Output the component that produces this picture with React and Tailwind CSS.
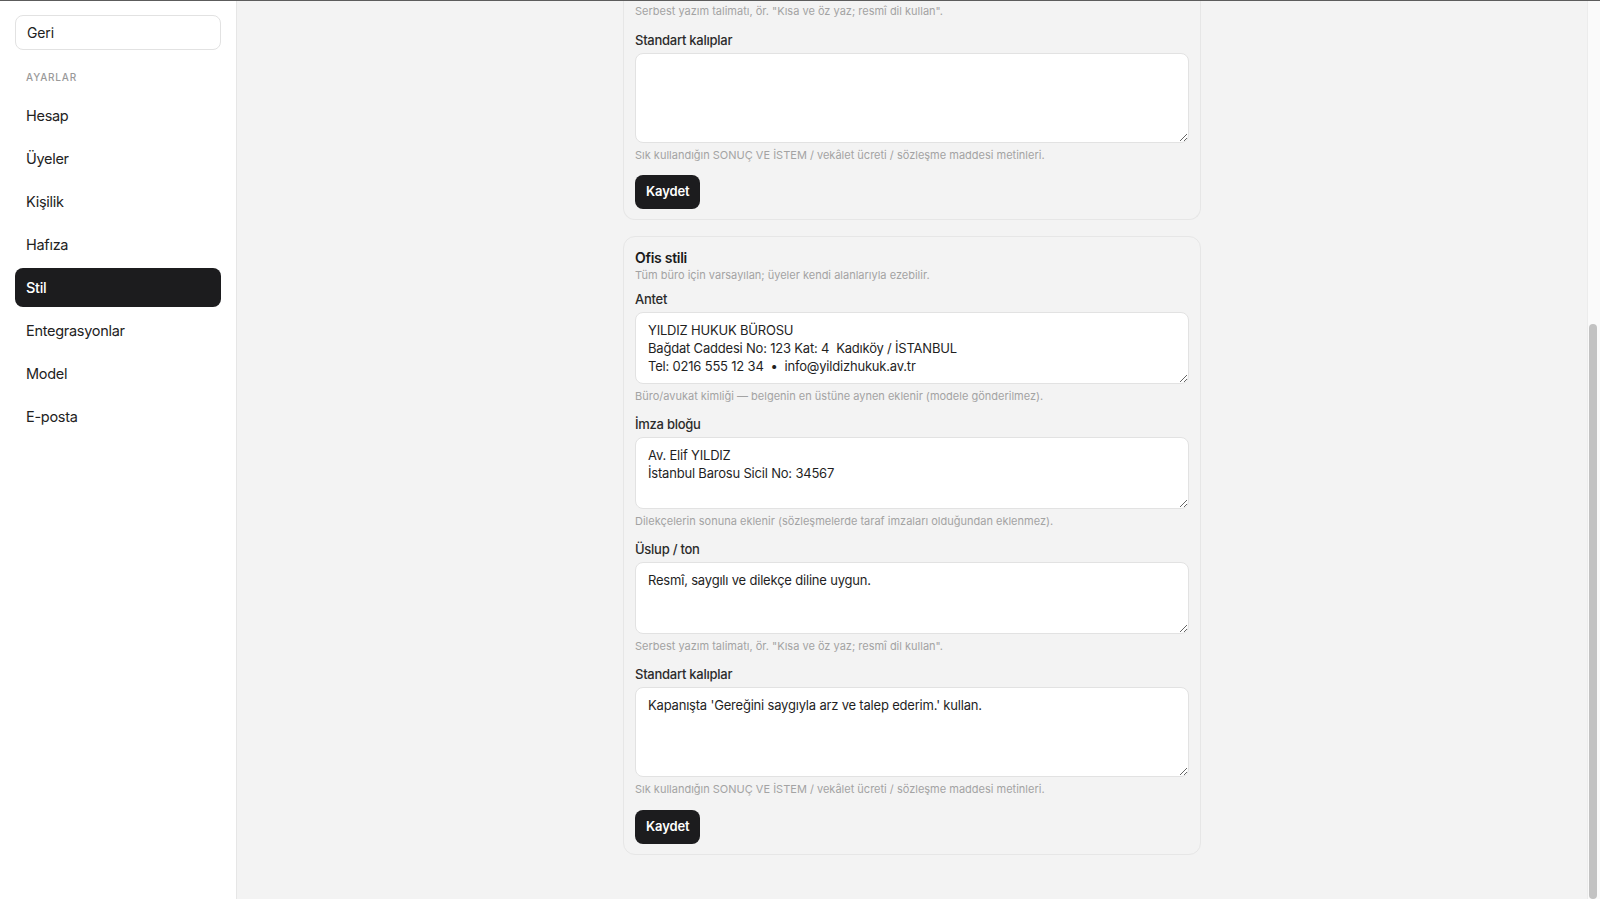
import React from 'react';

const navItems = ['Hesap', 'Üyeler', 'Kişilik', 'Hafıza', 'Stil', 'Entegrasyonlar', 'Model', 'E-posta'];

const Hint = ({ children, className = '' }) => (
  <p className={`text-[11px] leading-4 text-[#a3a3a3] ${className}`}>{children}</p>
);

const Field = ({ label, value, height, hint, className = '' }) => (
  <div className={className}>
    <label className="block text-[13px] leading-[18px] font-medium tracking-[-0.02em] text-[#2b2b2b]">{label}</label>
    <textarea
      defaultValue={value}
      className={`mt-1 block w-full ${height} rounded-lg border border-[#e2e2e2] bg-white px-3 pb-2 pt-[8px] text-[13px] leading-[18px] tracking-[-0.015em] text-[#1f1f1f] outline-none`}
    />
    <Hint className="mt-1">{hint}</Hint>
  </div>
);

const SaveButton = ({ className = '' }) => (
  <button className={`h-[34px] rounded-lg bg-[#1c1c1e] px-[11px] text-[13px] font-semibold tracking-[-0.01em] text-white ${className}`}>
    Kaydet
  </button>
);

export default function App() {
  return (
    <div className="flex h-screen flex-col overflow-hidden bg-[#f3f3f3] font-['Inter',sans-serif]">
      <div className="h-px w-full bg-[#5c5c5c]" />
      <div className="flex min-h-0 flex-1">
        {/* Sidebar */}
        <aside className="w-[237px] shrink-0 border-r border-[#e6e6e6] bg-white px-[15px] pt-[14px]">
          <button className="flex h-[35px] w-full items-center rounded-lg border border-[#e2e2e2] bg-white px-[11px] text-left text-[14px] tracking-[-0.01em] text-[#222]">
            Geri
          </button>
          <div className="mt-[19px] px-[11px] text-[10px] font-medium leading-4 tracking-[0.08em] text-[#9a9a9a]">AYARLAR</div>
          <nav className="mt-[11px] flex flex-col gap-1">
            {navItems.map(item => (
              <div
                key={item}
                className={`flex h-[39px] items-center rounded-lg px-[11px] text-[14.5px] tracking-[-0.02em] ${
                  item === 'Stil' ? 'bg-[#1c1c1e] font-medium text-white' : 'text-[#222]'
                }`}
              >
                {item}
              </div>
            ))}
          </nav>
        </aside>

        {/* Main */}
        <main className="min-w-0 flex-1 overflow-hidden">
          <div className="mx-auto flex max-w-[578px] flex-col gap-4">
            {/* Card 1 (scrolled, top cut off) */}
            <section className="rounded-b-xl border-x border-b border-[#e6e6e6] bg-[#f3f3f3] px-[11px] pb-[10px] pt-[2px]">
              <Hint>Serbest yazım talimatı, ör. "Kısa ve öz yaz; resmî dil kullan".</Hint>
              <Field
                className="mt-3"
                label="Standart kalıplar"
                value=""
                height="h-[90px]"
                hint="Sık kullandığın SONUÇ VE İSTEM / vekâlet ücreti / sözleşme maddesi metinleri."
              />
              <SaveButton className="mt-3" />
            </section>

            {/* Card 2 */}
            <section className="rounded-xl border border-[#e6e6e6] bg-[#f3f3f3] px-[11px] pb-[10px] pt-3">
              <h2 className="text-[14px] font-semibold leading-[18px] tracking-[-0.02em] text-[#1a1a1a]">Ofis stili</h2>
              <Hint>Tüm büro için varsayılan; üyeler kendi alanlarıyla ezebilir.</Hint>
              <Field
                className="mt-[7px]"
                label="Antet"
                value={'YILDIZ HUKUK BÜROSU\nBağdat Caddesi No: 123 Kat: 4  Kadıköy / İSTANBUL\nTel: 0216 555 12 34  •  info@yildizhukuk.av.tr'}
                height="h-[72px]"
                hint="Büro/avukat kimliği — belgenin en üstüne aynen eklenir (modele gönderilmez)."
              />
              <Field
                className="mt-[11px]"
                label="İmza bloğu"
                value={'Av. Elif YILDIZ\nİstanbul Barosu Sicil No: 34567'}
                height="h-[72px]"
                hint="Dilekçelerin sonuna eklenir (sözleşmelerde taraf imzaları olduğundan eklenmez)."
              />
              <Field
                className="mt-[11px]"
                label="Üslup / ton"
                value="Resmî, saygılı ve dilekçe diline uygun."
                height="h-[72px]"
                hint={'Serbest yazım talimatı, ör. "Kısa ve öz yaz; resmî dil kullan".'}
              />
              <Field
                className="mt-[11px]"
                label="Standart kalıplar"
                value="Kapanışta 'Gereğini saygıyla arz ve talep ederim.' kullan."
                height="h-[90px]"
                hint="Sık kullandığın SONUÇ VE İSTEM / vekâlet ücreti / sözleşme maddesi metinleri."
              />
              <SaveButton className="mt-[13px]" />
            </section>
          </div>
        </main>

        {/* Scrollbar */}
        <div className="flex w-[13px] shrink-0 flex-col border-l border-[#ececec] bg-[#fafafa] pl-px pr-[3px]">
          <div className="mt-[323px] flex-1 rounded-full bg-[#c2c2c2]" />
        </div>
      </div>
    </div>
  );
}
